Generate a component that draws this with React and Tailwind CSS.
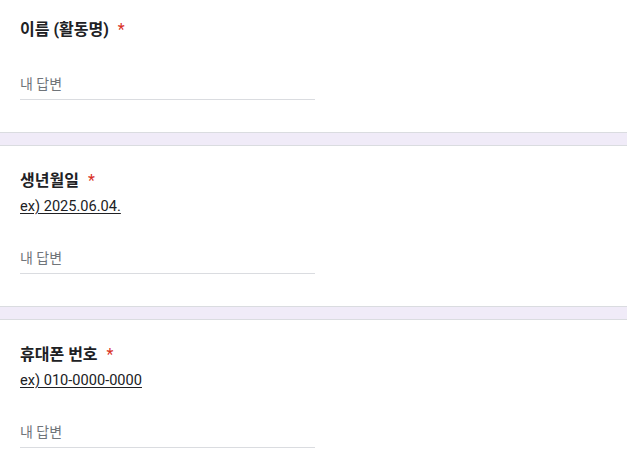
import React from 'react';

const questions = [
  { title: '이름 (활동명)', desc: null },
  { title: '생년월일', desc: 'ex) 2025.06.04.' },
  { title: '휴대폰 번호', desc: 'ex) 010-0000-0000' },
];

function QuestionCard({ title, desc }) {
  return (
    <div className="bg-white border-y border-[#dadce0] px-5 pt-[23px] pb-[32px]">
      <div className="text-base leading-6 font-bold text-[#202124]">
        {title}
        <span className="text-[#d93025] font-normal ml-[9px]">*</span>
      </div>
      {desc && (
        <div className="mt-[3px] mb-[2px] text-[14.6px] leading-5 text-[#202124] underline underline-offset-2">
          {desc}
        </div>
      )}
      <div className="mt-8 w-[295px] border-b border-[#dadce0] pb-[5px] text-sm leading-5 text-[#70757a]">
        내 답변
      </div>
    </div>
  );
}

export default function App() {
  return (
    <div
      className="min-h-screen bg-[#f0ebf8] flex flex-col gap-3 -mt-[6px]"
      style={{ fontFamily: 'Roboto, "Noto Sans CJK KR", sans-serif' }}
    >
      {questions.map((q) => (
        <QuestionCard key={q.title} {...q} />
      ))}
    </div>
  );
}
